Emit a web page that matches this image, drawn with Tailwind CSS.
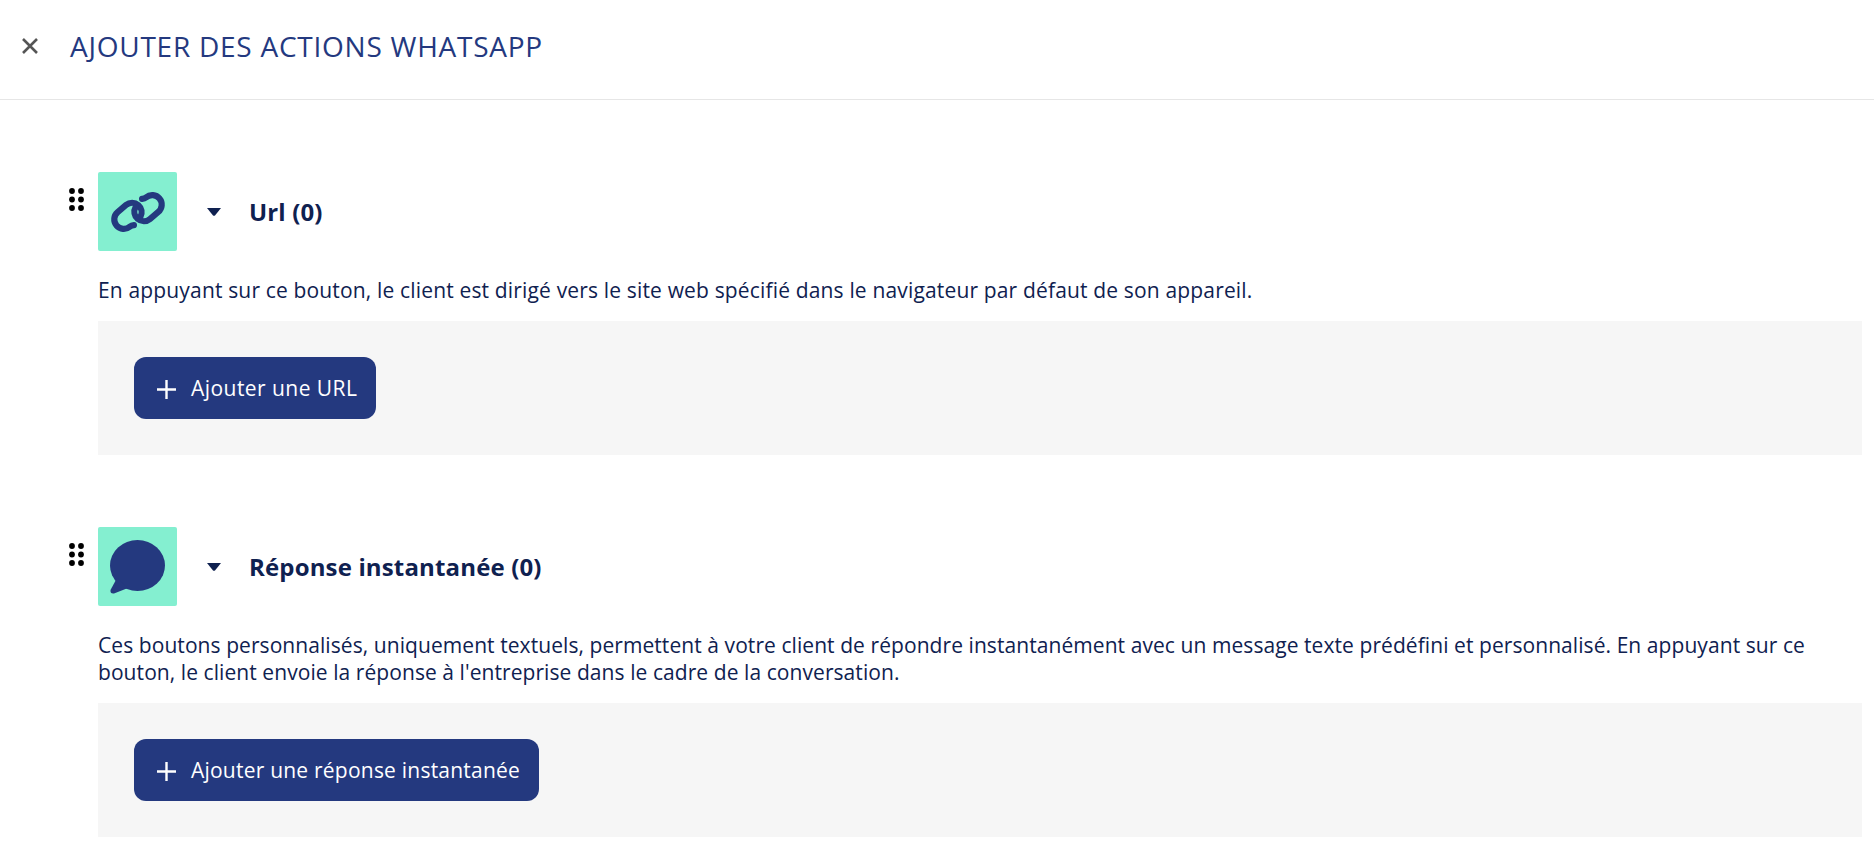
<!DOCTYPE html>
<html lang="fr">
<head>
    <meta charset="UTF-8">
    <title>Ajouter des actions WhatsApp</title>
    <script src="https://cdn.jsdelivr.net/npm/@tailwindcss/browser@4"></script>
</head>
<body class="bg-white font-['Open_Sans',sans-serif] text-[#0f2150] overflow-hidden">

    <!-- header -->
    <header class="h-[100px] flex items-center border-b border-[#e6e6e6] pl-[20px] pb-[8px]">
        <svg class="w-[20px] h-[20px] mr-[30px]" viewBox="0 0 20 20" fill="none" stroke="#555" stroke-width="2.6">
            <path d="M3 3 L17 17 M17 3 L3 17"/>
        </svg>
        <h1 class="text-[28px] tracking-[0.75px] text-[#24397f]">AJOUTER DES ACTIONS WHATSAPP</h1>
    </header>

    <main class="pl-[98px] pr-[12px] pt-[72px]">

        <!-- url -->
        <section class="mb-[72px]">
            <div class="relative flex items-center">
                <svg class="absolute left-[-29px] top-[16px] w-[15px] h-[23px]" viewBox="0 0 15 23" fill="#000">
                    <circle cx="3" cy="3" r="2.9"/><circle cx="12" cy="3" r="2.9"/>
                    <circle cx="3" cy="11.5" r="2.9"/><circle cx="12" cy="11.5" r="2.9"/>
                    <circle cx="3" cy="20" r="2.9"/><circle cx="12" cy="20" r="2.9"/>
                </svg>
                <div class="w-[79px] h-[79px] bg-[#84efd0] rounded-[2px] flex items-center justify-center">
                    <svg class="w-[56px] h-[44px]" viewBox="0 0 56 44" fill="none" stroke="#24397f" stroke-width="6.2" stroke-linecap="round">
                        <path transform="translate(18 25.8) rotate(-40)" d="M-1.5 11 Q-3.5 9.5 -5.5 9.5 A9.5 9.5 0 0 1 -5.5 -9.5 H5.5 A9.5 9.5 0 0 1 8.7 8.9"/>
                        <path transform="translate(38 18.2) rotate(140)" d="M-1.5 11 Q-3.5 9.5 -5.5 9.5 A9.5 9.5 0 0 1 -5.5 -9.5 H5.5 A9.5 9.5 0 0 1 8.7 8.9"/>
                    </svg>
                </div>
                <svg class="w-[14px] h-[8px] ml-[30px]" viewBox="0 0 14 8" fill="#0f2150"><path d="M0 0 H14 L8 7.5 Q7 8 6 7.5 Z"/></svg>
                <h2 class="ml-[28px] text-[24px] tracking-[0.15px] font-bold">Url (0)</h2>
            </div>
            <p class="mt-[26px] text-[21px] tracking-[0.16px] leading-[27px]">En appuyant sur ce bouton, le client est dirigé vers le site web spécifié dans le navigateur par défaut de son appareil.</p>
            <div class="mt-[17px] bg-[#f6f6f6] h-[134px] flex items-center pl-[36px]">
                <button class="h-[62px] pt-[2px] pl-[23px] pr-[19px] bg-[#24397f] rounded-[12px] text-white text-[21px] tracking-[0.45px] flex items-center gap-[15px]">
                    <svg class="w-[19px] h-[19px]" viewBox="0 0 19 19" stroke="#fff" stroke-width="2.4"><path d="M9.5 0 V19 M0 9.5 H19"/></svg>
                    Ajouter une URL
                </button>
            </div>
        </section>

        <!-- reponse instantanee -->
        <section>
            <div class="relative flex items-center">
                <svg class="absolute left-[-29px] top-[16px] w-[15px] h-[23px]" viewBox="0 0 15 23" fill="#000">
                    <circle cx="3" cy="3" r="2.9"/><circle cx="12" cy="3" r="2.9"/>
                    <circle cx="3" cy="11.5" r="2.9"/><circle cx="12" cy="11.5" r="2.9"/>
                    <circle cx="3" cy="20" r="2.9"/><circle cx="12" cy="20" r="2.9"/>
                </svg>
                <div class="w-[79px] h-[79px] bg-[#84efd0] rounded-[2px] flex items-center justify-center">
                    <svg class="w-[55px] h-[54px]" viewBox="0 0 55 54" fill="#24397f">
                        <ellipse cx="27.5" cy="25.5" rx="27.5" ry="25.5"/>
                        <path d="M7 38 L0.5 50 Q0 54 4 53.5 L18 48 Z"/>
                    </svg>
                </div>
                <svg class="w-[14px] h-[8px] ml-[30px]" viewBox="0 0 14 8" fill="#0f2150"><path d="M0 0 H14 L8 7.5 Q7 8 6 7.5 Z"/></svg>
                <h2 class="ml-[28px] text-[24px] tracking-[0.15px] font-bold">Réponse instantanée (0)</h2>
            </div>
            <p class="mt-[26px] text-[21px] tracking-[0.07px] leading-[27px]">Ces boutons personnalisés, uniquement textuels, permettent à votre client de répondre instantanément avec un message texte prédéfini et personnalisé. En appuyant sur ce bouton, le client envoie la réponse à l'entreprise dans le cadre de la conversation.</p>
            <div class="mt-[17px] bg-[#f6f6f6] h-[134px] flex items-center pl-[36px]">
                <button class="h-[62px] pt-[2px] pl-[23px] pr-[19px] bg-[#24397f] rounded-[12px] text-white text-[21px] tracking-[0.22px] flex items-center gap-[15px]">
                    <svg class="w-[19px] h-[19px]" viewBox="0 0 19 19" stroke="#fff" stroke-width="2.4"><path d="M9.5 0 V19 M0 9.5 H19"/></svg>
                    Ajouter une réponse instantanée
                </button>
            </div>
        </section>
    </main>
</body>
</html>
